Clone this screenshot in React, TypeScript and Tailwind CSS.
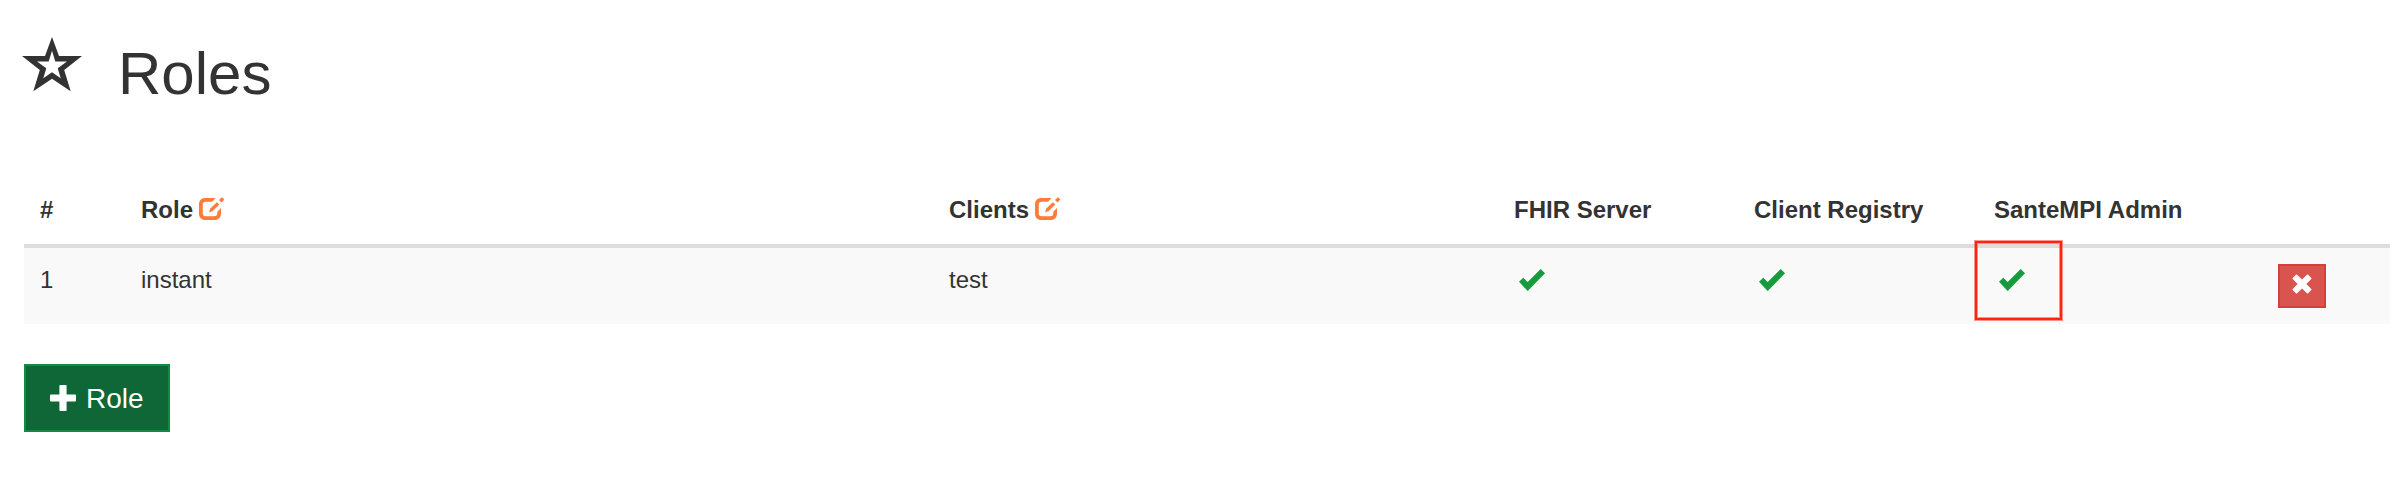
const columns = [
  { w: 'w-[101px]', label: '#' },
  { w: 'w-[808px]', label: 'Role', edit: true },
  { w: 'w-[565px]', label: 'Clients', edit: true },
  { w: 'w-[240px]', label: 'FHIR Server' },
  { w: 'w-[240px]', label: 'Client Registry' },
  { w: 'w-[284px]', label: 'SanteMPI Admin' },
  { w: 'w-[128px]', label: '' },
];

function StarIcon() {
  return (
    <svg className="mt-[7px] h-[55px] w-[60px] shrink-0" viewBox="0 0 60 55" fill="#333333" fillRule="evenodd">
      <path d="M30 0L37 19H60L42.200 33L48.700 54.200L30 41.700L11.300 54.200L17.800 33L0 19H23ZM30 13.800L26.700 24.400H15L24.300 31.200L21.300 41.200L30 35.200L38.700 41.200L35.700 31.200L45 24.400H33.300Z" />
    </svg>
  );
}

function EditIcon() {
  return (
    <svg className="mt-[4px] h-[24px] w-[26px] shrink-0" viewBox="0 0 26 24" fill="#ff7b39">
      <path d="M16.700 1H6.500C2.400 1 0 3.400 0 7.500V16.500C0 20.600 2.400 23 6.500 23H15.500C19.600 23 22 20.600 22 16.500V11L18.300 14.700V16.200C18.300 18.400 17.400 19.200 15.200 19.200H6.800C4.600 19.200 3.800 18.400 3.800 16.200V7.800C3.800 5.600 4.600 4.800 6.800 4.800H13Z" />
      <path d="M10 15.500L11.300 11.600L17.900 5.200L20.300 7.600L13.700 14.100Z" />
      <path d="M20 3.100L22.100 1C22.700 0.400 23.400 0.400 24 1L24.500 1.500C25.100 2.100 25.100 2.800 24.500 3.400L22.400 5.500Z" />
    </svg>
  );
}

function CheckIcon() {
  return (
    <svg className="ml-[5px] mt-[5px] h-[22px] w-[26px]" viewBox="0 0 26 22" fill="#179a3b">
      <path d="M0 12.700L4.300 8.700L8.700 13L21.700 0L26 4.300L8.700 22Z" />
    </svg>
  );
}

function RemoveIcon() {
  return (
    <svg className="h-5 w-5" viewBox="0 0 20 20" fill="#ffffff">
      <path d="M3.900 0.700Q4.500 0.100 5.100 0.700L10 5.600L14.900 0.700Q15.500 0.100 16.100 0.700L19.300 3.900Q19.900 4.500 19.300 5.100L14.400 10L19.300 14.900Q19.900 15.500 19.300 16.100L16.100 19.300Q15.500 19.900 14.900 19.300L10 14.400L5.100 19.300Q4.500 19.900 3.900 19.300L0.700 16.100Q0.100 15.500 0.700 14.900L5.600 10L0.700 5.100Q0.100 4.500 0.700 3.900Z" />
    </svg>
  );
}

function PlusIcon() {
  return (
    <svg className="h-[26px] w-[26px]" viewBox="0 0 26 26" fill="#ffffff">
      <rect x="9.400" y="0" width="7.200" height="26" rx="1" />
      <rect x="0" y="9.400" width="26" height="7.200" rx="1" />
    </svg>
  );
}

export default function App() {
  return (
    <main className="h-[502px] w-[2404px] overflow-hidden bg-white pl-6 pr-3.5 font-['Liberation_Sans',Arial,sans-serif] text-2xl leading-[34px] text-[#333333]">
      <h1 className="-ml-0.5 flex h-[180px] pt-[30px] text-[60px] leading-[84px]">
        <StarIcon />
        <span className="ml-[36px] pt-0.5">Roles</span>
      </h1>
      <div className="flex h-[68px] border-b-4 border-[#dddddd] pt-[13px] font-bold">
        {columns.map((c, i) => (
          <div key={i} className={`${c.w} flex shrink-0 gap-1.5 pl-4`}>
            <span>{c.label}</span>
            {c.edit && <EditIcon />}
          </div>
        ))}
      </div>
      <div className="flex h-[76px] bg-[#f9f9f9] pt-[15px]">
        <div className="w-[101px] shrink-0 pl-4">1</div>
        <div className="w-[808px] shrink-0 pl-4">instant</div>
        <div className="w-[565px] shrink-0 pl-4">test</div>
        <div className="w-[240px] shrink-0 pl-4 pt-px"><CheckIcon /></div>
        <div className="w-[240px] shrink-0 pl-4 pt-px"><CheckIcon /></div>
        <div className="relative w-[284px] shrink-0 pl-4 pt-px">
          <CheckIcon />
          <div className="absolute -left-[3px] -top-[22px] h-[79px] w-[87px] border-2 border-[#ff2311] shadow-[0_0_0_1px_#ff2d1c80,inset_0_0_0_1px_#ff2d1c80]" />
        </div>
        <div className="w-[128px] shrink-0 pl-4 pt-px">
          <button className="flex h-11 w-12 items-center justify-center border-2 border-[#d43f3a] bg-[#d9534f] pb-1">
            <RemoveIcon />
          </button>
        </div>
      </div>
      <button className="mt-10 flex h-[68px] w-[146px] items-center gap-2.5 border-2 border-[#118c3f] bg-[#0f6636] pl-6 text-[28px] text-white">
        <PlusIcon />
        <span className="pt-0.5">Role</span>
      </button>
    </main>
  );
}
